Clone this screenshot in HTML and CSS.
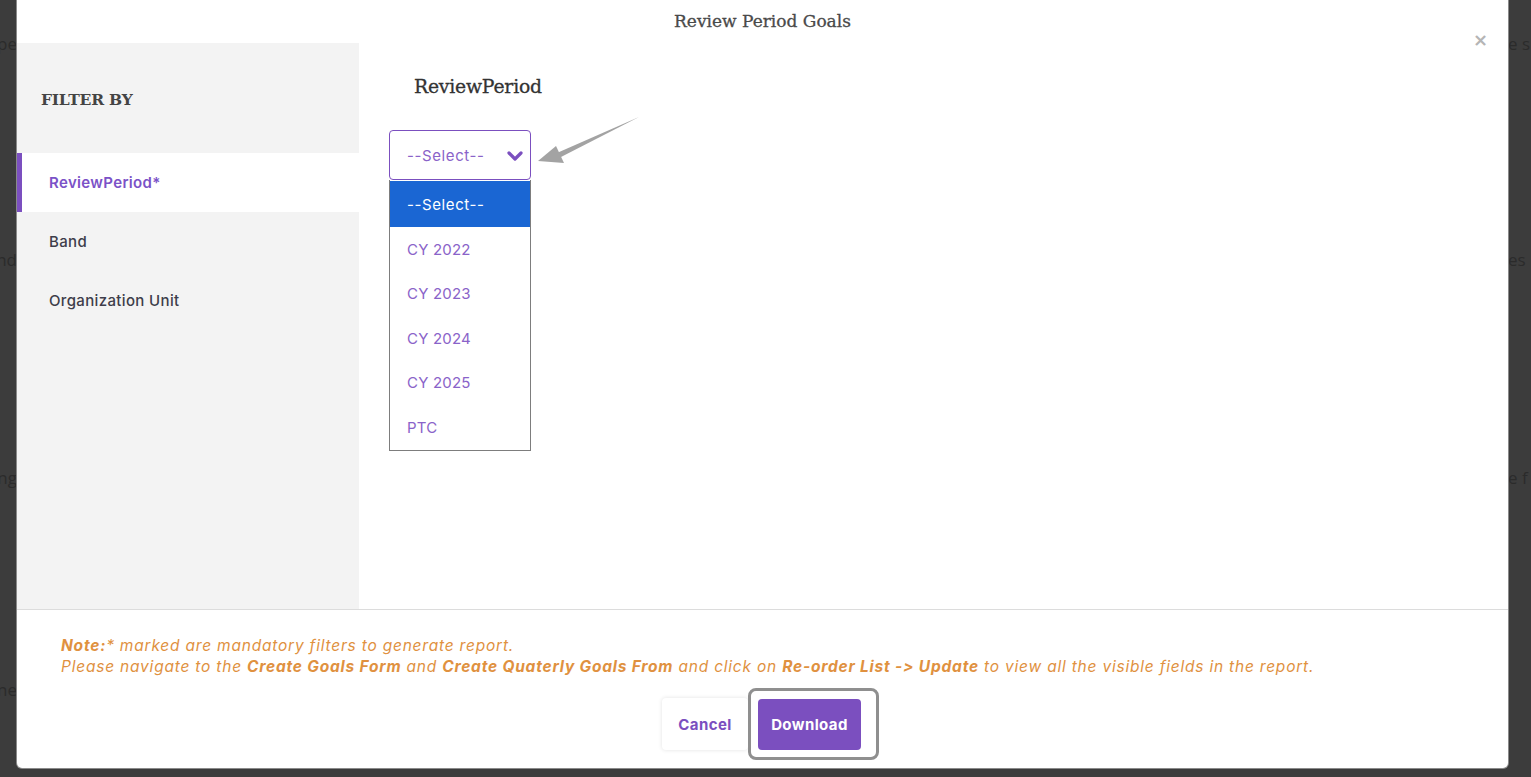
FILE: index.html
```html
<!DOCTYPE html>
<html lang="en">
<head>
<meta charset="utf-8">
<title>Review Period Goals</title>
<link rel="stylesheet" href="styles.css">
</head>
<body>
<div class="page">
  <div class="strip strip-left">
    <span class="ghost g1">pe</span>
    <span class="ghost g2">nd</span>
    <span class="ghost g3">ng</span>
    <span class="ghost g4">ne</span>
  </div>
  <div class="modal">
    <div class="modal-header">
      <h1 class="modal-title">Review Period Goals</h1>
      <span class="close">&times;</span>
    </div>
    <div class="modal-body">
      <aside class="sidebar">
        <div class="filter-title">FILTER BY</div>
        <ul class="filter-list">
          <li class="filter-item active">ReviewPeriod*</li>
          <li class="filter-item">Band</li>
          <li class="filter-item">Organization Unit</li>
        </ul>
      </aside>
      <section class="content">
        <h2 class="field-label">ReviewPeriod</h2>
        <div class="select-wrap">
          <div class="select-box">
            <span class="select-text">--Select--</span>
            <svg class="chev" width="16" height="12" viewBox="0 0 16 12"><path d="M2 3 L8 9 L14 3" fill="none" stroke="#7b4fbf" stroke-width="3.2" stroke-linecap="round" stroke-linejoin="round"/></svg>
          </div>
          <ul class="options">
            <li class="option selected">--Select--</li>
            <li class="option">CY 2022</li>
            <li class="option">CY 2023</li>
            <li class="option">CY 2024</li>
            <li class="option">CY 2025</li>
            <li class="option">PTC</li>
          </ul>
          <svg class="pointer" width="104" height="50" viewBox="0 0 104 50"><path d="M101 1 L20 36.5 L22 41.5 Z" fill="#a3a3a3"/><path d="M0 45 L18 30 L26 47 Z" fill="#a3a3a3"/></svg>
        </div>
      </section>
    </div>
    <div class="modal-footer">
      <p class="note"><b>Note:</b>* marked are mandatory filters to generate report.<br>Please navigate to the <b>Create Goals Form</b> and <b>Create Quaterly Goals From</b> and click on <b>Re-order List -&gt; Update</b> to view all the visible fields in the report.</p>
      <div class="actions">
        <button class="btn btn-cancel">Cancel</button>
        <span class="focus-ring"><button class="btn btn-download">Download</button></span>
      </div>
    </div>
  </div>
  <div class="strip strip-right">
    <span class="ghost r1">e s</span>
    <span class="ghost r2">es</span>
    <span class="ghost r3">e f</span>
  </div>
</div>
</body>
</html>
```
FILE: styles.css
```css
* { box-sizing: border-box; }
html, body { margin: 0; padding: 0; }
body {
  width: 1531px;
  height: 777px;
  overflow: hidden;
  background: #3c3c3c;
  font-family: Inter, "Noto Sans", sans-serif;
  font-variant-ligatures: none;
  font-feature-settings: "calt" 0, "liga" 0;
}
.page {
  display: flex;
  height: 777px;
}
.strip {
  display: flex;
  flex-direction: column;
  overflow: hidden;
  font-family: "Open Sans", sans-serif;
  font-size: 17px;
  color: #2b2b2b;
}
.strip-left { width: 17px; align-items: flex-end; }
.strip-right { width: 23px; align-items: flex-start; }
.ghost { white-space: nowrap; line-height: 20px; }
.g1 { margin-top: 34px; }
.g2 { margin-top: 196px; }
.g3 { margin-top: 198px; }
.g4 { margin-top: 192px; }
.r1 { margin-top: 34px; }
.r2 { margin-top: 196px; }
.r3 { margin-top: 198px; }

.modal {
  position: relative;
  width: 1491px;
  height: 768px;
  background: #fff;
  border-radius: 0 0 5px 5px;
  display: flex;
  flex-direction: column;
  box-shadow: 0 0 0 1px #8a8a8a;
}
.modal-header {
  height: 43px;
  display: flex;
  align-items: flex-start;
  justify-content: center;
}
.modal-title {
  margin: 10px 0 0;
  font-family: "DejaVu Serif", serif;
  font-weight: normal;
  font-size: 17px;
  line-height: 22px;
  color: #4a4a4a;
  letter-spacing: 0;
  -webkit-text-stroke: 0.3px #4a4a4a;
}
.close {
  position: absolute;
  top: 29px;
  right: 20px;
  font-family: "DejaVu Sans", sans-serif;
  font-size: 18px;
  font-weight: bold;
  color: #b5b5b5;
  line-height: 22px;
}
.modal-body {
  height: 567px;
  display: flex;
  border-bottom: 1px solid #dcdcdc;
}
.sidebar {
  width: 342px;
  background: #f3f3f3;
  display: flex;
  flex-direction: column;
}
.filter-title {
  height: 110px;
  padding: 47px 0 0 24px;
  font-family: "DejaVu Serif", serif;
  font-weight: bold;
  font-size: 15.5px;
  color: #444;
  letter-spacing: -0.2px;
}
.filter-list {
  list-style: none;
  margin: 0;
  padding: 0;
}
.filter-item {
  height: 59px;
  display: flex;
  align-items: center;
  padding-left: 32px;
  font-size: 15px;
  letter-spacing: 0.35px;
  font-weight: 500;
  color: #3d3d4a;
}
.filter-item.active {
  background: #fff;
  color: #7b52c7;
  font-weight: 600;
  border-left: 5px solid #7b4fbf;
  padding-left: 27px;
}
.content {
  flex: 1;
  padding: 33px 0 0 30px;
}
.field-label {
  margin: 0 0 32px 25px;
  font-family: "DejaVu Serif", serif;
  font-weight: normal;
  font-size: 18.8px;
  line-height: 22px;
  color: #333;
  letter-spacing: -0.2px;
  -webkit-text-stroke: 0.3px #333;
}
.select-wrap {
  position: relative;
  width: 142px;
}
.select-box {
  height: 50px;
  border: 1.5px solid #7b4fbf;
  border-radius: 4px;
  display: flex;
  align-items: center;
  justify-content: space-between;
  padding: 0 7px 0 17px;
}
.select-text {
  font-size: 15px;
  letter-spacing: 0.6px;
  color: #8a63c9;
}
.chev { margin-top: 1px; }
.options {
  list-style: none;
  margin: 0;
  padding: 1px 0 0;
  border: 1px solid #7d7d7d;
  border-top: none;
  height: 271px;
}
.option {
  height: 44.5px;
  display: flex;
  align-items: center;
  padding-left: 17px;
  font-size: 15px;
  letter-spacing: 0.2px;
  color: #8a63c9;
}
.option.selected {
  background: #1a66d3;
  color: #fff;
  height: 46px;
  letter-spacing: 0.6px;
}
.pointer {
  position: absolute;
  left: 149px;
  top: -14px;
}
.modal-footer {
  flex: 1;
  display: flex;
  flex-direction: column;
  padding: 25px 0 0 44px;
}
.note {
  margin: 0;
  font-style: italic;
  font-size: 15.5px;
  letter-spacing: 0.79px;
  line-height: 21px;
  color: #e0913f;
}
.note b { font-weight: 700; }
.actions {
  display: flex;
  align-items: center;
  margin-top: 11px;
  margin-left: -44px;
  padding-left: 645px;
}
.btn {
  font-family: Inter, "Noto Sans", sans-serif;
  font-weight: 700;
  font-size: 15px;
  letter-spacing: 0.4px;
  border: none;
  border-radius: 4px;
  cursor: pointer;
}
.btn-cancel {
  width: 86px;
  height: 52px;
  background: #fff;
  color: #7b4fbf;
  box-shadow: 0 0 4px rgba(0,0,0,0.12);
}
.focus-ring {
  display: flex;
  padding: 8px 15px 7px 7px;
  border: 3px solid #8f8f8f;
  border-radius: 8px;
}
.btn-download {
  width: 103px;
  height: 51px;
  background: #7b4fbf;
  color: #fff;
}
```
